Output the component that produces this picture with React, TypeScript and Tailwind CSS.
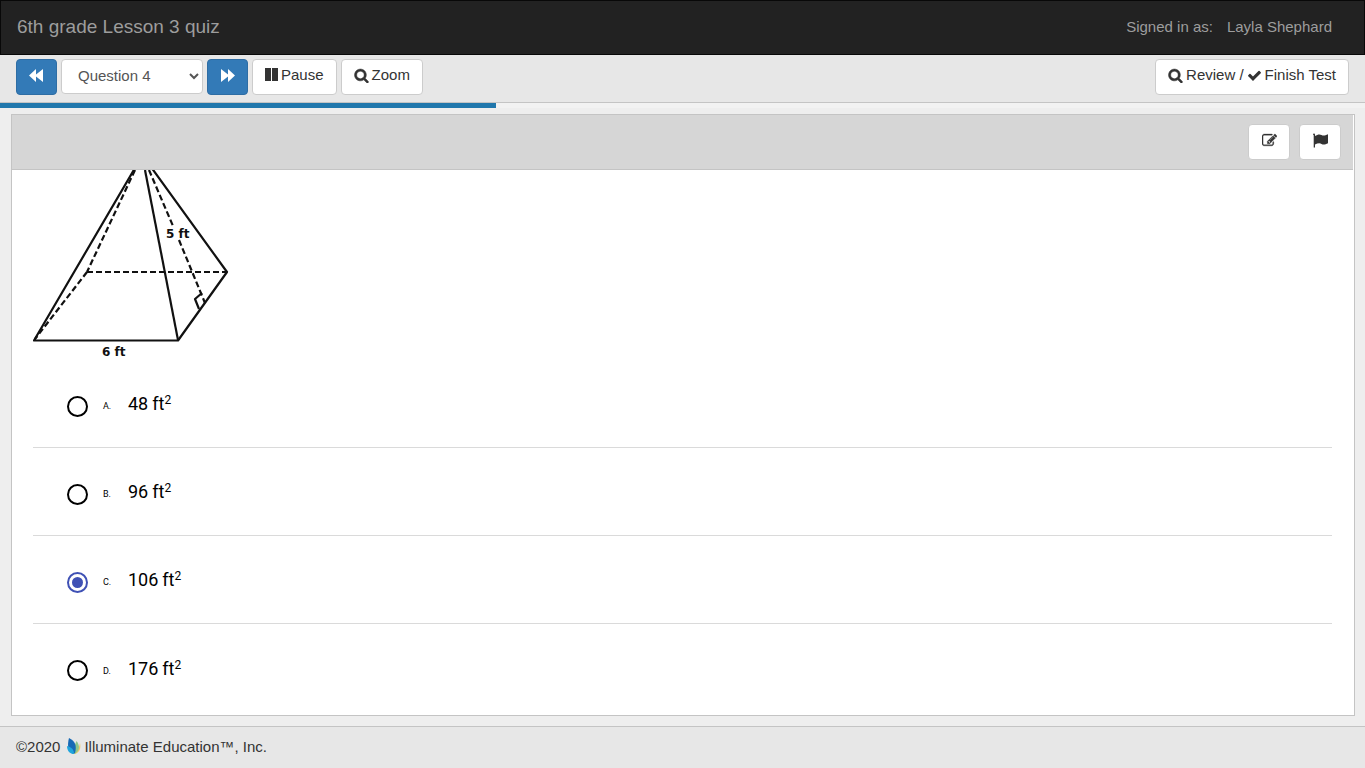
import { useState } from "react";
import type { ReactNode } from "react";

const SEARCH =
  "M1216 832q0-185-131.5-316.5t-316.5-131.5-316.5 131.5-131.5 316.5 131.5 316.5 316.5 131.5 316.5-131.5 131.5-316.5zm512 832q0 52-38 90t-90 38q-54 0-90-38l-343-342q-179 124-399 124-143 0-273.5-55.5t-225-150-150-225-55.5-273.5 55.5-273.5 150-225 225-150 273.5-55.5 273.5 55.5 225 150 150 225 55.5 273.5q0 220-124 399l343 343q37 37 37 90z";
const CHECK =
  "M1671 566q0 40-28 68l-724 724-136 136q-28 28-68 28t-68-28l-136-136-362-362q-28-28-28-68t28-68l136-136q28-28 68-28t68 28l294 295 656-657q28-28 68-28t68 28l136 136q28 28 28 68z";
const EDIT =
  "M888 1184l116-116-152-152-116 116v56h96v96h56zm440-720q-16-16-33 1l-350 350q-17 17-1 33t33-1l350-350q17-17 1-33zm80 594v190q0 119-84.5 203.5t-203.5 84.5h-832q-119 0-203.5-84.5t-84.5-203.5v-832q0-119 84.5-203.5t203.5-84.5h832q63 0 117 25 15 7 18 23 3 17-9 29l-49 49q-14 14-32 8-23-6-45-6h-832q-66 0-113 47t-47 113v832q0 66 47 113t113 47h832q66 0 113-47t47-113v-126q0-13 9-22l64-64q15-15 35-7t20 29zm-96-738l288 288-672 672h-288v-288zm444 132l-92 92-288-288 92-92q28-28 68-28t68 28l152 152q28 28 28 68t-28 68z";
const FLAG =
  "M0 1.500a1 1 0 0 1 2 0V14.500H.7V2.300zM2 3c2.500-1.700 4.800-2 6.500-1s3.500.7 6.500-.7v9c-3 1.500-5 1.500-6.500.6s-4-.7-6.500.7z";

function Glyph({ d, box = "0 0 1792 1792", stroke = 0 }: { d: string; box?: string; stroke?: number }) {
  return (
    <svg
      viewBox={box}
      className="size-[15px] shrink-0"
      fill="currentColor"
      stroke={stroke ? "currentColor" : "none"}
      strokeWidth={stroke}
      aria-hidden="true"
    >
      <path d={d} />
    </svg>
  );
}

function PauseGlyph() {
  return (
    <svg viewBox="0 0 13 14" className="h-[14px] w-[13px] shrink-0" fill="currentColor" aria-hidden="true">
      <path d="M0 0h6v13H0zM7 0h6v13H7z" />
    </svg>
  );
}

function PlainButton({ children }: { children: ReactNode }) {
  return (
    <button
      type="button"
      className="flex h-9 items-center gap-[3px] rounded border border-[#ccc] bg-white px-3 pb-1 text-[#333]"
    >
      {children}
    </button>
  );
}

function IconButton({ label, children }: { label: string; children: ReactNode }) {
  return (
    <button
      type="button"
      aria-label={label}
      className="flex h-9 w-[42px] items-center justify-center rounded border border-[#ccc] bg-white pb-1 text-[#333]"
    >
      {children}
    </button>
  );
}

function NavButton({ d, label, onClick }: { d: string; label: string; onClick: () => void }) {
  return (
    <button
      type="button"
      aria-label={label}
      onClick={onClick}
      className="flex h-9 w-[41px] items-center justify-center rounded border border-[#2e6da4] bg-[#337ab7] pb-1 text-white"
    >
      <Glyph d={d} box="0 0 15 15" />
    </button>
  );
}

function Pyramid() {
  return (
    <svg viewBox="0 0 200 190" className="block h-[190px] w-[200px]" role="img" aria-label="Square pyramid">
      <g fill="none" stroke="#111" strokeWidth="2.2" strokeLinejoin="round">
        <path d="M102 -2 1 170.500H145L194 102 118 -3" />
        <path d="M112 0 145 170" />
        <g strokeDasharray="6 3">
          <path d="M102 0 54 102" />
          <path d="M54 102 2 169" />
          <path d="M54 102H193" />
          <path d="M116 0 140 56" />
          <path d="M146 70 172 133" />
        </g>
        <path d="M169 123 162 129 166 139" />
      </g>
      <g fill="#111" fontFamily="'DejaVu Sans', sans-serif" fontWeight="700" fontSize="12">
        <text x="133" y="68">5 ft</text>
        <text x="69" y="186">6 ft</text>
      </g>
    </svg>
  );
}

function Leaf() {
  return (
    <svg viewBox="0 0 14 17" className="h-[17px] w-[14px]" aria-hidden="true">
      <path d="M13 5c1 5 0 9-5 11l-1-1c4-2 5-5 6-10z" fill="#f2c766" />
      <path d="M9.500 3c4 5 3 10-2 13L5 14z" fill="#8cc68b" />
      <path d="M2 0c6 3 8 7 6 15l-2 1C1 13 0 8 2 0z" fill="#1769b5" />
      <path d="M0 8c4 1 7 3 7 8C3 16 0 13 0 8z" fill="#20a5dc" />
    </svg>
  );
}

const choices = [
  { letter: "A.", value: "48" },
  { letter: "B.", value: "96" },
  { letter: "C.", value: "106" },
  { letter: "D.", value: "176" },
];

export default function App() {
  const [answer, setAnswer] = useState("C.");
  const [question, setQuestion] = useState(4);

  return (
    <div className="flex min-h-screen flex-col bg-[#eee] font-['Liberation_Sans',Arial,sans-serif] text-[15px] leading-5 text-[#333]">
      <header className="flex h-[55px] items-center justify-between border border-[#080808] bg-[#222] pr-8 pb-0.5 pl-4 text-[#9d9d9d]">
        <h1 className="text-[19px]">6th grade Lesson 3 quiz</h1>
        <p className="flex gap-[14px]">
          <span>Signed in as:</span>
          <span>Layla Shephard</span>
        </p>
      </header>

      <nav className="flex h-12 items-start justify-between border-b border-[#c4c4c4] bg-[#e7e7e7] px-4 pt-1">
        <div className="flex gap-1">
          <NavButton label="Previous question" d="M7 1v5.500L14 1v13L7 8.500V14L0 7.500z" onClick={() => setQuestion(Math.max(1, question - 1))} />
          <select
            aria-label="Question"
            value={question}
            onChange={(e) => setQuestion(Number(e.target.value))}
            className="h-[35px] w-[142px] rounded border border-[#ccc] bg-white pb-0.5 pl-3 text-[#555]"
          >
            {[1, 2, 3, 4, 5, 6, 7, 8, 9, 10, 11].map((n) => (
              <option key={n} value={n}>
                Question {n}
              </option>
            ))}
          </select>
          <NavButton label="Next question" d="M8 1v5.500L1 1v13l7-5.500V14l7-6.500z" onClick={() => setQuestion(Math.min(11, question + 1))} />
          <PlainButton>
            <PauseGlyph />
            Pause
          </PlainButton>
          <PlainButton>
            <Glyph d={SEARCH} stroke={60} />
            Zoom
          </PlainButton>
        </div>
        <PlainButton>
          <Glyph d={SEARCH} stroke={60} />
          Review /
          <Glyph d={CHECK} />
          Finish Test
        </PlainButton>
      </nav>

      <div className="h-[5px] bg-[#f2f2f2]">
        <div className="h-full w-4/11 bg-[#2077ac]" />
      </div>

      <main className="mt-[6px] mr-[10px] mb-[10px] ml-[11px] flex flex-1 flex-col border border-[#c4c4c4] bg-white">
        <div className="mr-px flex h-[55px] items-center justify-end gap-[9px] border-b border-[#c4c4c4] bg-[#d6d6d6] pr-3">
          <IconButton label="Notes">
            <Glyph d={EDIT} stroke={40} />
          </IconButton>
          <IconButton label="Flag question">
            <Glyph d={FLAG} box="0 0 15 15" />
          </IconButton>
        </div>
        <div className="pr-[22px] pl-[21px]">
          <Pyramid />
          <fieldset aria-label="Answer choices" className="divide-y divide-[#dadada]">
            {choices.map(({ letter, value }) => (
              <label key={letter} className="flex h-[88px] items-center pt-[5px] pl-[34px] font-[Roboto,sans-serif] text-black">
                <input
                  type="radio"
                  name="answer"
                  checked={answer === letter}
                  onChange={() => setAnswer(letter)}
                  className="size-[21px] appearance-none rounded-full border-2 border-black bg-white bg-clip-content p-[3px] checked:border-[#3f51b5] checked:bg-[#3f51b5]"
                />
                <span className="ml-[15px] w-[25px] text-[9px]">{letter}</span>
                <span className="pb-1 text-[18px] leading-6">
                  {value}
                  <span className="ml-1">ft</span>
                  <sup className="text-[12px]">2</sup>
                </span>
              </label>
            ))}
          </fieldset>
        </div>
      </main>

      <footer className="flex h-[42px] items-center border-t border-[#c4c4c4] bg-[#e7e7e7] px-4 pb-0.5">
        <span className="mr-[7px]">©2020</span>
        <Leaf />
        <span className="ml-[3px]">Illuminate Education™, Inc.</span>
      </footer>
    </div>
  );
}
